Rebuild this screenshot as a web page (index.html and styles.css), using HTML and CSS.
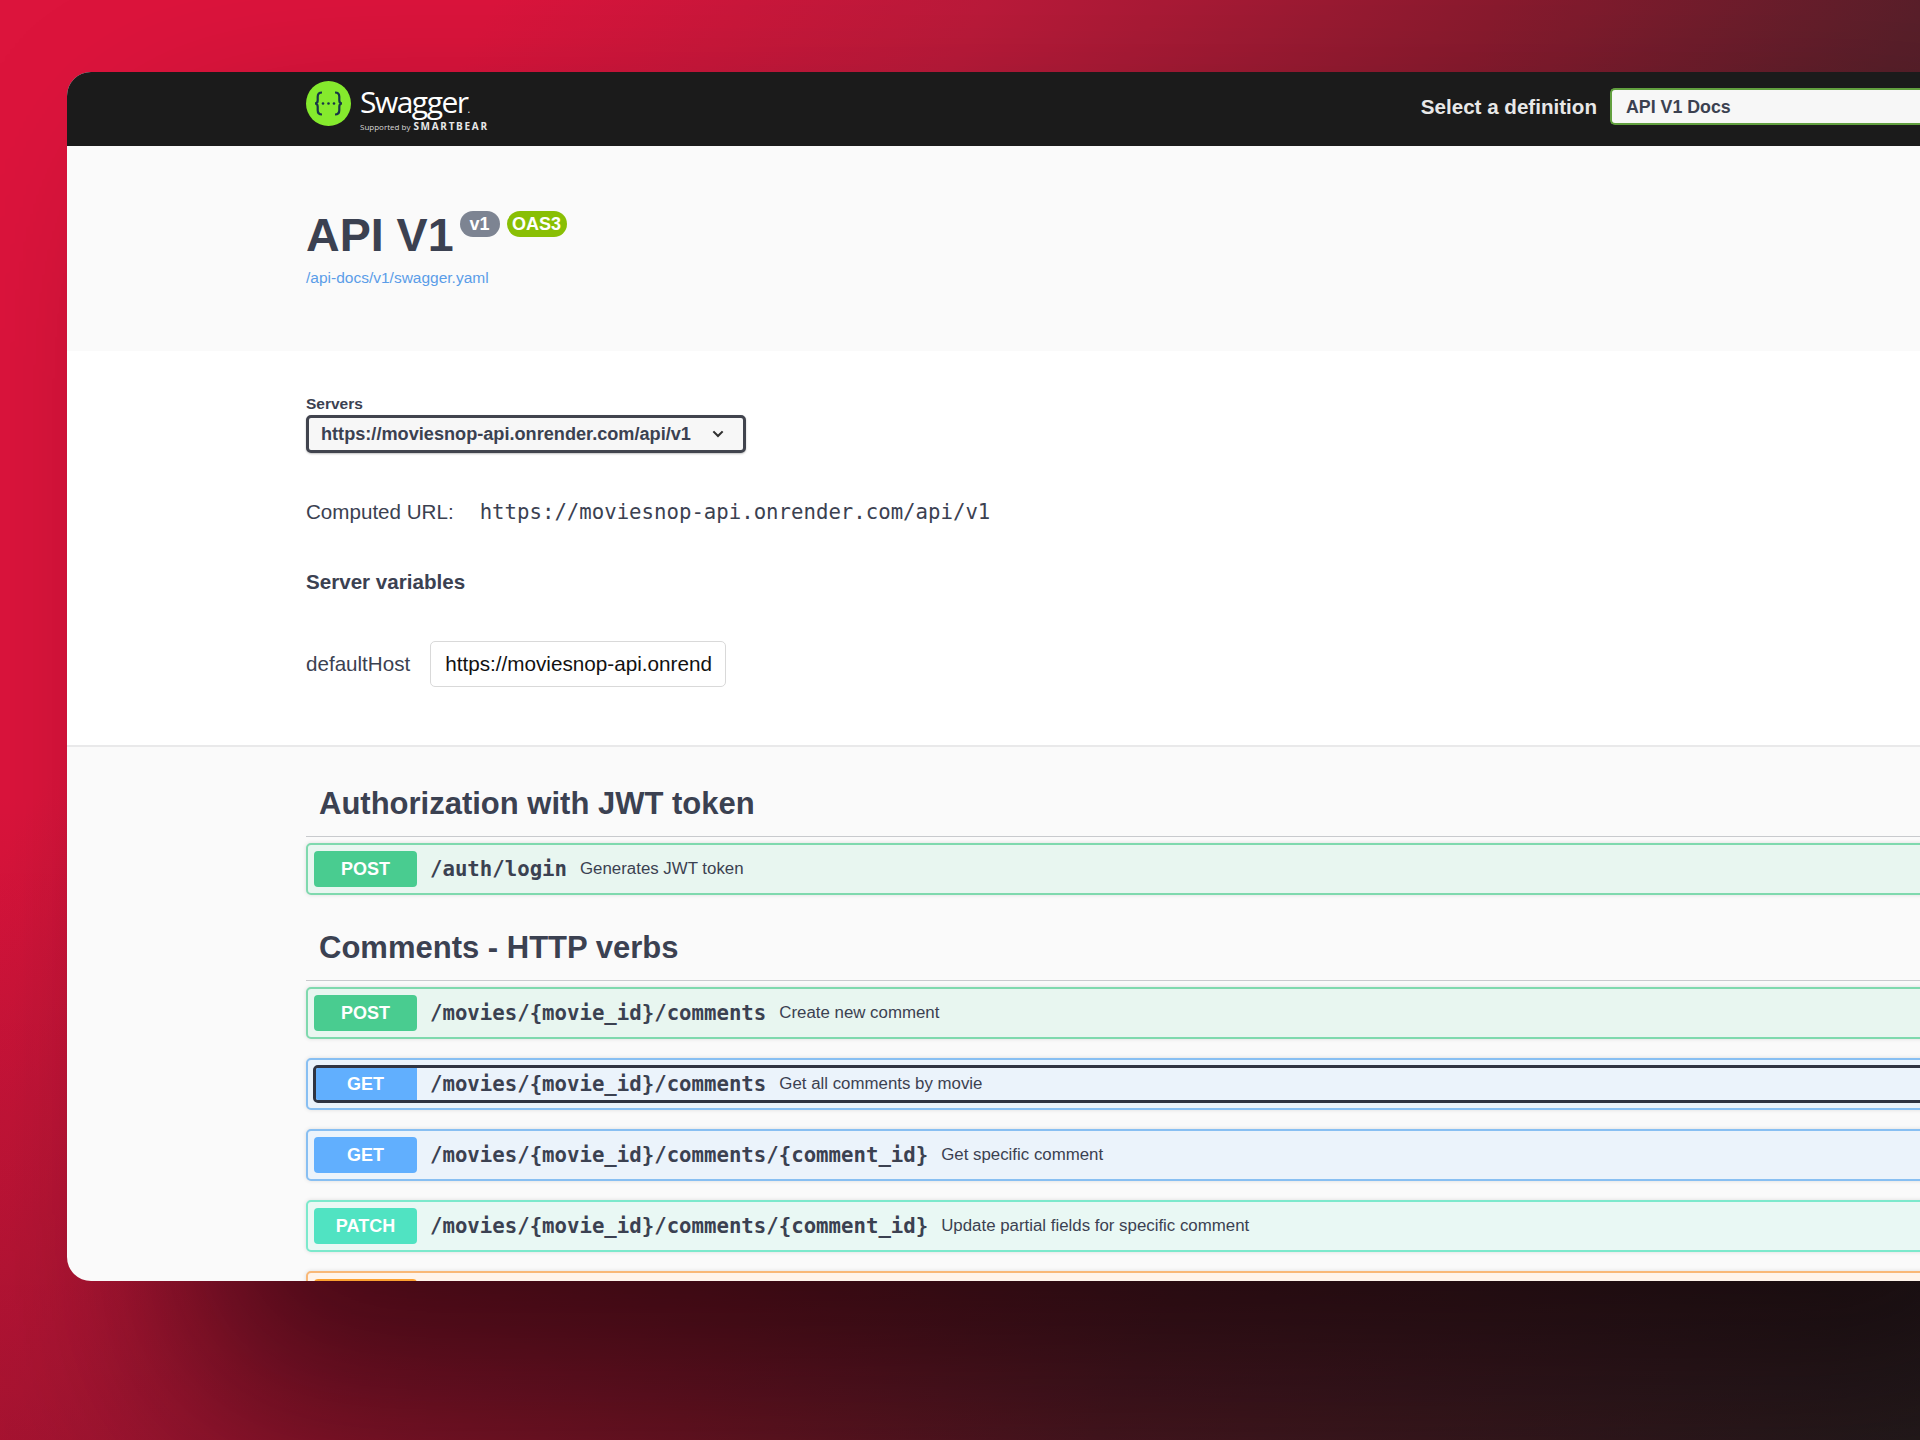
FILE: index.html
```html
<!DOCTYPE html>
<html lang="en">
<head>
<meta charset="utf-8">
<title>Swagger UI</title>
<link rel="stylesheet" href="styles.css">
</head>
<body>
<main class="window">
  <header class="topbar">
    <div class="brand">
      <svg class="brand-mark" viewBox="0 0 45 45" aria-hidden="true">
        <circle cx="22.5" cy="22.5" r="22.5" fill="#85ea2d"/>
        <path d="M16 11.5c-3.4 0-4.3 1.4-4.3 4.2v3.6c0 2-.9 3.2-2.7 3.2 1.8 0 2.7 1.2 2.7 3.2v3.6c0 2.8.9 4.2 4.3 4.2M29 11.5c3.4 0 4.3 1.4 4.3 4.2v3.6c0 2 .9 3.2 2.7 3.2-1.8 0-2.7 1.2-2.7 3.2v3.6c0 2.8-.9 4.2-4.3 4.2" fill="none" stroke="#173647" stroke-width="2.2"/>
        <circle cx="17" cy="22.5" r="1.3" fill="#173647"/><circle cx="22.5" cy="22.5" r="1.3" fill="#173647"/><circle cx="28" cy="22.5" r="1.3" fill="#173647"/>
      </svg>
      <div class="brand-text">
        <div class="brand-name">Swagger<span class="brand-dot">.</span></div>
        <div class="brand-sub"><span class="brand-by">Supported by</span> <span class="brand-bear">SMARTBEAR</span></div>
      </div>
    </div>
    <div class="definition">
      <span class="definition-label">Select a definition</span>
      <div class="definition-select">API V1 Docs</div>
    </div>
  </header>

  <section class="info">
    <div class="title-row">
      <h1 class="title">API V1</h1>
      <span class="badge badge-version">v1</span>
      <span class="badge badge-oas">OAS3</span>
    </div>
    <a class="spec-link" href="#">/api-docs/v1/swagger.yaml</a>
  </section>

  <section class="servers">
    <div class="servers-label">Servers</div>
    <div class="server-select">
      <span>https://moviesnop-api.onrender.com/api/v1</span>
      <svg class="chevron" viewBox="0 0 20 20" aria-hidden="true"><path d="M13.25 7.2 10 10.5 6.75 7.2 5.5 8.4l4.5 4.6 4.5-4.6z" fill="#303030"/></svg>
    </div>
    <div class="computed">
      <span class="computed-label">Computed URL:</span>
      <code class="computed-url">https://moviesnop-api.onrender.com/api/v1</code>
    </div>
    <h4 class="variables-title">Server variables</h4>
    <div class="variable">
      <span class="variable-name">defaultHost</span>
      <div class="variable-input">https://moviesnop-api.onrend</div>
    </div>
  </section>

  <section class="operations">
    <h3 class="tag">Authorization with JWT token</h3>
    <div class="op op-post">
      <span class="method">POST</span>
      <span class="path">/auth/login</span>
      <span class="desc">Generates JWT token</span>
    </div>

    <h3 class="tag tag-next">Comments - HTTP verbs</h3>
    <div class="op op-post">
      <span class="method">POST</span>
      <span class="path">/movies/{movie_id}/comments</span>
      <span class="desc">Create new comment</span>
    </div>
    <div class="op op-get">
      <div class="op-focus">
        <span class="method">GET</span>
        <span class="path">/movies/{movie_id}/comments</span>
        <span class="desc">Get all comments by movie</span>
      </div>
    </div>
    <div class="op op-get">
      <span class="method">GET</span>
      <span class="path">/movies/{movie_id}/comments/{comment_id}</span>
      <span class="desc">Get specific comment</span>
    </div>
    <div class="op op-patch">
      <span class="method">PATCH</span>
      <span class="path">/movies/{movie_id}/comments/{comment_id}</span>
      <span class="desc">Update partial fields for specific comment</span>
    </div>
    <div class="op op-put">
      <span class="method"></span>
    </div>
  </section>
</main>
</body>
</html>
```
FILE: styles.css
```css
* { box-sizing: border-box; }
html, body { margin: 0; height: 1440px; overflow: hidden; }
body {
  padding: 72px 0 0 67px;
  font-family: "Liberation Sans", Arial, sans-serif;
  color: #3b4151;
  background:
    linear-gradient(to bottom, rgba(40, 0, 10, 0) 55%, rgba(40, 0, 10, .2) 100%),
    linear-gradient(120deg, #dc143c 18%, #bb1a3a 36%, #8a1a2e 54.5%, #5a1f2a 70%, #282525 100%);
}
.window {
  width: 1853px;
  height: 1209px;
  overflow: hidden;
  border-radius: 24px 0 0 24px;
  background: #fafafa;
  box-shadow: 120px 120px 200px rgba(8, 2, 4, .62);
}
.topbar {
  height: 74px;
  background: #1b1b1b;
  display: flex;
  align-items: flex-start;
  justify-content: space-between;
  padding: 9px 0 0 239px;
}
.brand { display: flex; gap: 9px; align-items: flex-start; }
.brand-mark { width: 45px; height: 45px; display: block; }
.brand-text { color: #fff; }
.brand-name { font: 400 30px/34px "Open Sans", sans-serif; letter-spacing: -1.5px; margin-top: 4px; }
.brand-dot { font-size: 10px; }
.brand-sub { display: flex; align-items: center; gap: 3px; margin-top: -5px; height: 11px; }
.brand-by { font: 400 8px/11px "Open Sans", sans-serif; color: #d8d8d8; }
.brand-bear { font: 700 10px/11px "Open Sans", sans-serif; letter-spacing: 1.7px; color: #e8e8e8; }
.definition { display: flex; align-items: center; gap: 13px; margin-top: 7px; }
.definition-label { font-size: 20.6px; font-weight: 700; color: #e8e8e8; }
.definition-select {
  width: 315px;
  height: 37px;
  margin-right: -5px;
  padding-left: 14px;
  border: 2px solid #62a03f;
  border-right: 0;
  border-radius: 5px 0 0 5px;
  background: #f7f7f7;
  font-size: 17.8px;
  font-weight: 700;
  line-height: 35px;
}
.info {
  height: 205px;
  padding: 64px 0 0 239px;
}
.title-row { display: flex; align-items: flex-start; height: 50px; }
.title { margin: 0; font-size: 46.6px; line-height: 50px; font-weight: 700; }
.badge {
  height: 26px;
  margin-top: 1px;
  border-radius: 13px;
  color: #fff;
  font-size: 18px;
  font-weight: 700;
  line-height: 26px;
  text-align: center;
}
.badge-version { width: 40px; margin-left: 6px; background: #7d8492; }
.badge-oas { width: 60px; margin-left: 7px; background: #89bf04; }
.spec-link {
  display: block;
  margin-top: 8px;
  font-size: 15.5px;
  line-height: 19px;
  color: #5a9de8;
  text-decoration: none;
}
.servers {
  height: 396px;
  padding: 44px 0 0 239px;
  background: #fff;
  border-bottom: 2px solid #e9e9ea;
}
.servers-label { font-size: 15.5px; font-weight: 700; line-height: 17px; }
.server-select {
  display: flex;
  align-items: center;
  justify-content: space-between;
  width: 440px;
  height: 38px;
  margin-top: 3px;
  padding: 0 13px 0 12px;
  border: 3px solid #41444e;
  border-radius: 5px;
  background: #f7f7f7;
  font-size: 18.15px;
  font-weight: 700;
  box-shadow: 0 1px 2px rgba(0, 0, 0, .25);
}
.chevron { width: 24px; height: 24px; }
.computed { display: flex; align-items: center; height: 24px; margin-top: 47px; gap: 26px; }
.computed-label { font-size: 20.6px; }
.computed-url { font: 400 20.7px/24px "DejaVu Sans Mono", monospace; }
.variables-title { margin: 46px 0 0; font-size: 20.6px; line-height: 24px; font-weight: 700; }
.variable { display: flex; align-items: center; gap: 20px; margin-top: 47px; }
.variable-name { font-size: 20.6px; }
.variable-input {
  width: 296px;
  height: 46px;
  padding-left: 14px;
  border: 1px solid #d9d9d9;
  border-radius: 5px;
  background: #fff;
  color: #111;
  font-size: 20.7px;
  line-height: 44px;
  white-space: nowrap;
  overflow: hidden;
}
.operations { padding: 36px 0 0 239px; }
.tag {
  margin: 0 0 6px;
  height: 54px;
  padding: 0 0 0 13px;
  border-bottom: 1px solid #c8cacd;
  font-size: 31px;
  line-height: 41px;
  font-weight: 700;
}
.tag-next { margin-top: 32px; }
.op {
  display: flex;
  align-items: center;
  width: 1700px;
  height: 52px;
  margin-bottom: 19px;
  padding: 6px;
  border: 2px solid;
  border-radius: 5px;
  box-shadow: 0 0 4px rgba(0, 0, 0, .12);
}
.op-focus {
  display: flex;
  align-items: center;
  flex: 1;
  height: 38px;
  margin: 0 -1px;
  border: 3px solid #2f3442;
  border-radius: 5px;
  overflow: hidden;
}
.method {
  flex: none;
  width: 103px;
  height: 36px;
  margin-right: 13px;
  border-radius: 4px;
  color: #fff;
  font-size: 18px;
  font-weight: 700;
  line-height: 36px;
  text-align: center;
}
.op-focus .method { width: 101px; padding-right: 2px; border-radius: 0; height: 32px; line-height: 32px; }
.path { font: 700 20.7px/24px "DejaVu Sans Mono", monospace; margin-right: 13px; white-space: nowrap; }
.desc { font-size: 16.85px; white-space: nowrap; }
.op-post { border-color: #7fd9ae; background: #e8f6f0; }
.op-post .method { background: #49cc90; }
.op-get { border-color: #88bff2; background: #ebf3fb; }
.op-get .method { background: #61affe; }
.op-patch { border-color: #7ce9cc; background: #e9f8f4; }
.op-patch .method { background: #50e3c2; }
.op-put { border-color: #f9b877; background: #fff4eb; }
.op-put .method { background: #fca130; }
```
